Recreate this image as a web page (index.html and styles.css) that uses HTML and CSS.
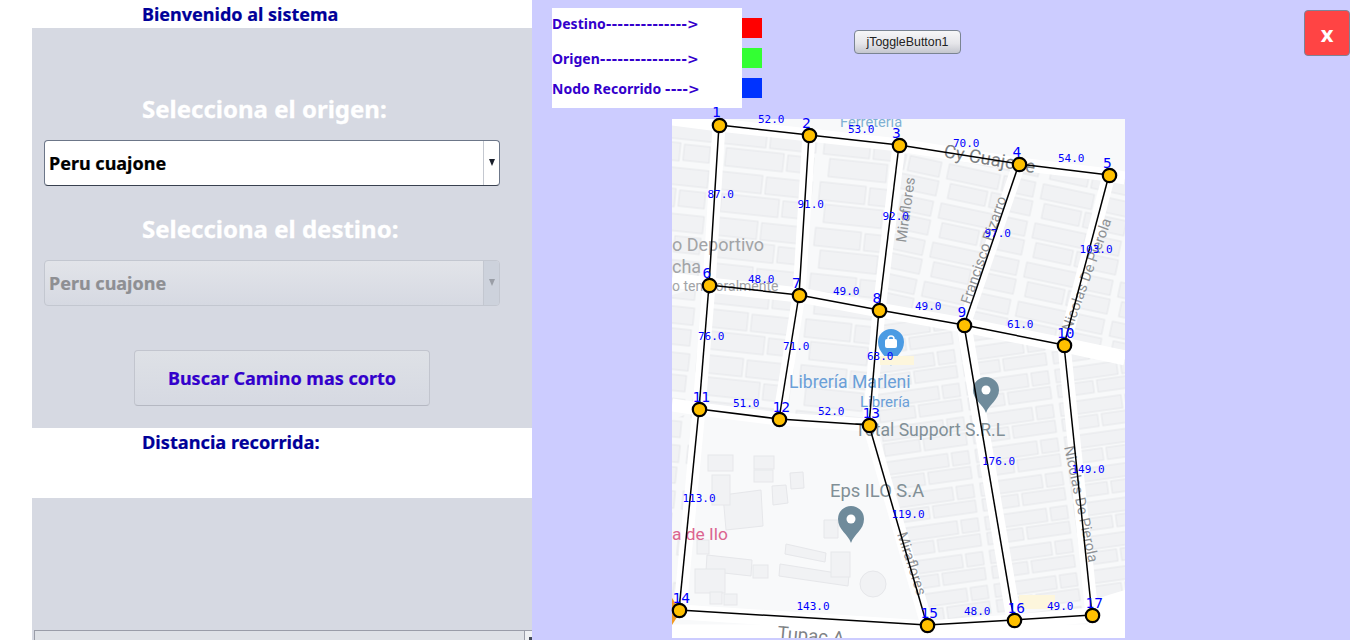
FILE: index.html
```html
<!DOCTYPE html>
<html lang="es">
<head>
<meta charset="utf-8">
<title>Camino mas corto</title>
<link rel="stylesheet" href="styles.css">
</head>
<body>
<div class="app">
  <section class="left">
    <h1 class="heading heading-top">Bienvenido al sistema</h1>
    <div class="form-panel">
      <h2 class="select-label">Selecciona el origen:</h2>
      <div class="combo">
        <span class="combo-value">Peru cuajone</span>
        <span class="combo-arrow"><i class="tri"></i></span>
      </div>
      <h2 class="select-label label-second">Selecciona el destino:</h2>
      <div class="combo combo-disabled">
        <span class="combo-value">Peru cuajone</span>
        <span class="combo-arrow"><i class="tri"></i></span>
      </div>
      <button class="search-btn" type="button">Buscar Camino mas corto</button>
    </div>
    <div class="distance">
      <h2 class="heading">Distancia recorrida:</h2>
    </div>
    <div class="result-panel">
      <div class="result-list"><span class="result-scroll"></span></div>
    </div>
  </section>

  <section class="right">
    <div class="top-row">
      <div class="legend">
        <div class="legend-row legend-first">Destino<span class="dash">--------------&gt;</span></div>
        <div class="legend-row">Origen<span class="dash">---------------&gt;</span></div>
        <div class="legend-row">Nodo Recorrido <span class="dash">----&gt;</span></div>
      </div>
      <div class="swatches">
        <span class="swatch swatch-red"></span>
        <span class="swatch swatch-green"></span>
        <span class="swatch swatch-blue"></span>
      </div>
      <button class="toggle-btn" type="button">jToggleButton1</button>
      <button class="close-btn" type="button">X</button>
    </div>

    <svg class="map" width="453" height="519" viewBox="672 119 453 519" xmlns="http://www.w3.org/2000/svg">
      <defs>
        <clipPath id="mapclip"><rect x="672" y="119" width="453" height="519"/></clipPath>
        <pattern id="b1" width="104" height="46" patternUnits="userSpaceOnUse" patternTransform="rotate(6)">
          <g class="bld">
            <rect x="3" y="3" width="46" height="18"/><rect x="53" y="4" width="46" height="17"/>
            <rect x="10" y="25" width="58" height="18"/><rect x="72" y="26" width="26" height="16"/>
          </g>
        </pattern>
        <pattern id="b2" width="96" height="40" patternUnits="userSpaceOnUse" patternTransform="rotate(12)">
          <g class="bld">
            <rect x="3" y="3" width="52" height="15"/><rect x="59" y="3" width="32" height="15"/>
            <rect x="8" y="22" width="38" height="15"/><rect x="50" y="22" width="42" height="15"/>
          </g>
        </pattern>
        <pattern id="b3" width="90" height="34" patternUnits="userSpaceOnUse" patternTransform="rotate(-8)">
          <g class="bld">
            <rect x="3" y="3" width="62" height="13"/><rect x="69" y="3" width="17" height="13"/>
            <rect x="3" y="19" width="36" height="12"/><rect x="43" y="19" width="43" height="12"/>
          </g>
        </pattern>
      </defs>

      <g clip-path="url(#mapclip)">
        <rect class="map-bg" x="672" y="119" width="453" height="519"/>

        <polygon fill="url(#b1)" points="672,119 719,125 709,285 672,285"/>
        <polygon fill="url(#b1)" points="719,125 809,135 799,295 709,285"/>
        <polygon fill="url(#b1)" points="809,135 899,145 879,310 799,295"/>
        <polygon fill="url(#b2)" points="899,145 1019,164 964,325 879,310"/>
        <polygon fill="url(#b2)" points="1019,164 1109,175 1064,345 964,325"/>
        <polygon fill="url(#b2)" points="1109,175 1125,175 1125,350 1064,345"/>
        <polygon fill="url(#b1)" points="672,295 709,285 699,409 672,409"/>
        <polygon fill="url(#b1)" points="709,285 799,295 779,419 699,409"/>
        <polygon fill="url(#b1)" points="799,295 879,310 869,425 779,419"/>
        <polygon fill="url(#b3)" points="879,310 964,325 1014,620 927,625 869,425"/>
        <polygon fill="url(#b3)" points="964,325 1064,345 1092,615 1014,620"/>
        <polygon fill="url(#b3)" points="1064,345 1125,355 1125,600 1092,615"/>
        <polygon fill="url(#b1)" points="672,420 699,409 680,600 672,600"/>

        <g class="bld">
          <polygon points="723,495 761,490 763,526 726,530"/>
          <rect x="754" y="456" width="20" height="13"/><rect x="754" y="470" width="19" height="12"/>
          <polygon points="772,486 786,485 788,503 773,505"/>
          <polygon points="790,473 803,472 804,488 791,489"/>
          <polygon points="786,544 826,553 825,562 785,554"/>
          <polygon points="780,564 849,575 848,586 779,576"/>
          <rect x="831" y="552" width="19" height="25"/>
          <polygon points="824,520 838,520 838,538 824,538"/>
          <polygon points="707,555 752,560 751,576 706,571"/>
          <rect x="753" y="565" width="15" height="13"/>
          <rect x="695" y="569" width="30" height="24"/>
          <rect x="710" y="592" width="12" height="12"/><rect x="724" y="594" width="13" height="11"/>
          <circle cx="873" cy="584" r="13"/>
          <rect x="708" y="455" width="25" height="16"/><rect x="712" y="475" width="18" height="30"/>
          <rect x="697" y="540" width="12" height="14"/>
        </g>

        <g class="roads">
          <polyline points="672,119 719,125 809,135 899,145 1019,164 1109,175 1125,178"/>
          <polyline points="719,125 709,285 699,409 680,610"/>
          <polyline points="809,135 799,295 779,419"/>
          <polyline points="899,145 879,310 869,425"/>
          <polyline points="1019,164 964,325"/>
          <polyline points="1109,175 1064,345"/>
          <polyline class="road-wide" points="672,280 709,285 799,295 879,310 964,325 1064,345 1125,358"/>
          <polyline points="672,405 699,409 779,419 869,425"/>
          <polyline points="869,425 927,625"/>
          <polyline class="road-wide" points="964,325 1014,620"/>
          <polyline points="1064,345 1092,615"/>
          <polyline class="road-wide" points="672,606 680,612 927,628 1014,622 1125,612"/>
          <polyline class="road-wide" points="672,632 1125,632"/>
          <polygon class="road-plain" points="1092,600 1125,590 1125,638 1085,638"/>
        </g>

        <g class="pin-gray">
          <path d="M986 413c-3-9-13-13-13-23a13 13 0 0 1 26 0c0 10-10 14-13 23z"/>
          <path d="M851 543c-3-9-13-13-13-24a13 13 0 0 1 26 0c0 11-10 15-13 24z"/>
        </g>
        <circle class="pin-hole" cx="986" cy="390" r="4.5"/>
        <circle class="pin-hole" cx="851" cy="519" r="4.5"/>
        <path class="pin-blue" d="M891 366c-3-9-13-13-13-24a13 13 0 0 1 26 0c0 11-10 15-13 24z"/>
        <rect class="pin-hole" x="885" y="339" width="12" height="9" rx="2"/>
        <path class="pin-bag" d="M888 339a3 3 0 0 1 6 0"/>
        <path class="pin-orange" d="M672 598l4 6 3 10-7 11z"/>

        <rect class="hilite" x="880" y="356" width="34" height="9"/>
        <rect class="hilite" x="1019" y="595" width="36" height="14"/>

        <text class="m-blue m-ferr" x="840" y="127">Ferretería</text>
        <text class="m-cuaj" transform="translate(943 157) rotate(10)">Cy Cuajone</text>
        <text class="m-dep" x="672" y="251">o Deportivo</text>
        <text class="m-dep" x="672" y="273">cha</text>
        <text class="m-small" x="672" y="291">o temporalmente</text>
        <text class="m-blue m-lib" x="789" y="388">Librería Marleni</text>
        <text class="m-blue m-lib2" x="860" y="407">Librería</text>
        <text class="m-total" x="855" y="436">Total Support S.R.L</text>
        <text class="m-eps" x="830" y="497">Eps ILO S.A</text>
        <text class="m-pink" x="672" y="540">a de Ilo</text>
        <text class="m-street" transform="translate(906 243) rotate(-82)">Miraflores</text>
        <text class="m-street" transform="translate(970 305) rotate(-71)">Francisco Pizarro</text>
        <text class="m-street" transform="translate(1071 332) rotate(-70)">Nicolas De Pierola</text>
        <text class="m-street" transform="translate(1064 447) rotate(78)">Nicolas De Pierola</text>
        <text class="m-street" transform="translate(897 534) rotate(72)">Miraflores</text>
        <text class="m-cuaj" transform="translate(777 639) rotate(5)">Tupac A</text>
      </g>

      <g class="edges">
        <line x1="719" y1="125" x2="809" y2="135"/><line x1="809" y1="135" x2="899" y2="145"/>
        <line x1="899" y1="145" x2="1019" y2="164"/><line x1="1019" y1="164" x2="1109" y2="175"/>
        <line x1="719" y1="125" x2="709" y2="285"/><line x1="809" y1="135" x2="799" y2="295"/>
        <line x1="899" y1="145" x2="879" y2="310"/><line x1="1019" y1="164" x2="964" y2="325"/>
        <line x1="1109" y1="175" x2="1064" y2="345"/>
        <line x1="709" y1="285" x2="799" y2="295"/><line x1="799" y1="295" x2="879" y2="310"/>
        <line x1="879" y1="310" x2="964" y2="325"/><line x1="964" y1="325" x2="1064" y2="345"/>
        <line x1="709" y1="285" x2="699" y2="409"/><line x1="799" y1="295" x2="779" y2="419"/>
        <line x1="879" y1="310" x2="869" y2="425"/><line x1="964" y1="325" x2="1014" y2="620"/>
        <line x1="1064" y1="345" x2="1092" y2="615"/>
        <line x1="699" y1="409" x2="779" y2="419"/><line x1="779" y1="419" x2="869" y2="425"/>
        <line x1="699" y1="409" x2="679" y2="610"/><line x1="869" y1="425" x2="927" y2="625"/>
        <line x1="679" y1="610" x2="927" y2="625"/><line x1="927" y1="625" x2="1014" y2="620"/>
        <line x1="1014" y1="620" x2="1092" y2="615"/>
      </g>

      <g class="weights">
        <text x="758" y="123">52.0</text><text x="848" y="133">53.0</text>
        <text x="953" y="147">70.0</text><text x="1058" y="162">54.0</text>
        <text x="707.5" y="198">87.0</text><text x="797.5" y="208">91.0</text>
        <text x="882.5" y="220">92.0</text><text x="984.5" y="237">97.0</text>
        <text x="1079.5" y="253">103.0</text><text x="748" y="283">48.0</text>
        <text x="833" y="295">49.0</text><text x="915" y="310">49.0</text>
        <text x="1007" y="328">61.0</text><text x="698" y="340">76.0</text>
        <text x="783" y="350">71.0</text><text x="867" y="360">63.0</text>
        <text x="733" y="407">51.0</text><text x="818" y="415">52.0</text>
        <text x="982" y="465">176.0</text><text x="1071.5" y="473">149.0</text>
        <text x="891.5" y="518">119.0</text><text x="682.5" y="502">113.0</text>
        <text x="796.5" y="610">143.0</text><text x="964" y="615">48.0</text>
        <text x="1047" y="610">49.0</text>
      </g>

      <g class="nodes">
        <circle cx="719.5" cy="125.5" r="6.7"/><circle cx="809.5" cy="135.5" r="6.7"/>
        <circle cx="899.5" cy="145.5" r="6.7"/><circle cx="1019.5" cy="164.5" r="6.7"/>
        <circle cx="1109.5" cy="175.5" r="6.7"/><circle cx="709.5" cy="285.5" r="6.7"/>
        <circle cx="799.5" cy="295.5" r="6.7"/><circle cx="879.5" cy="310.5" r="6.7"/>
        <circle cx="964.5" cy="325.5" r="6.7"/><circle cx="1064.5" cy="345.5" r="6.7"/>
        <circle cx="699.5" cy="409.5" r="6.7"/><circle cx="779.5" cy="419.5" r="6.7"/>
        <circle cx="869.5" cy="425.5" r="6.7"/><circle cx="679.5" cy="610.5" r="6.7"/>
        <circle cx="927.5" cy="625.5" r="6.7"/><circle cx="1014.5" cy="620.5" r="6.7"/>
        <circle cx="1092.5" cy="615.5" r="6.7"/>
      </g>

      <g class="node-ids">
        <text x="712" y="117">1</text><text x="802" y="128">2</text>
        <text x="892" y="138">3</text><text x="1012.5" y="157">4</text>
        <text x="1103" y="168">5</text><text x="702.5" y="278">6</text>
        <text x="792" y="288">7</text><text x="872.5" y="303">8</text>
        <text x="957.5" y="317">9</text><text x="1057" y="338">10</text>
        <text x="692.5" y="402">11</text><text x="772.5" y="412">12</text>
        <text x="862.5" y="418">13</text><text x="672.5" y="603">14</text>
        <text x="920.5" y="618">15</text><text x="1007.5" y="613">16</text>
        <text x="1085.5" y="608">17</text>
      </g>
    </svg>
  </section>
</div>
</body>
</html>
```

FILE: styles.css
```css
* { box-sizing: border-box; }

html, body {
  margin: 0;
  height: 100%;
  overflow: hidden;
  background: #fff;
}

.app {
  display: flex;
  width: 1350px;
  height: 640px;
  font-family: "Noto Sans", "DejaVu Sans", sans-serif;
}

/* ---------- left column ---------- */
.left {
  width: 532px;
  flex: none;
  display: flex;
  flex-direction: column;
  background: #fff;
}

.heading {
  margin: 0;
  font-size: 18px;
  line-height: 28px;
  font-weight: 700;
  color: #000099;
  -webkit-text-stroke: 0.2px #000099;
}

.heading-top {
  height: 28px;
  padding-left: 142px;
}

.form-panel {
  margin-left: 32px;
  height: 400px;
  padding: 61px 32px 0 12px;
  background: #d6d9e2;
  display: flex;
  flex-direction: column;
  align-items: flex-start;
}

.select-label {
  margin: 0 0 11px;
  padding-left: 98px;
  font-size: 24px;
  line-height: 40px;
  font-weight: 700;
  color: #fff;
  -webkit-text-stroke: 0.3px #fff;
}

.label-second { margin-top: 23px; }

.combo {
  width: 456px;
  height: 46px;
  display: flex;
  align-items: stretch;
  border: 1px solid #6c7688;
  border-bottom-color: #39414f;
  border-radius: 4px;
  background: #fff;
  overflow: hidden;
}

.combo-value {
  flex: 1;
  padding-left: 4px;
  font-size: 18px;
  line-height: 44px;
  font-weight: 700;
  color: #000;
  -webkit-text-stroke: 0.2px currentColor;
}

.combo-arrow {
  width: 16px;
  flex: none;
  display: flex;
  align-items: center;
  justify-content: center;
  border-left: 1px solid #c4c8d0;
}

.tri {
  display: block;
  width: 0;
  height: 0;
  margin-bottom: 2px;
  border-left: 3.5px solid transparent;
  border-right: 3.5px solid transparent;
  border-top: 7px solid #1a1f2b;
}

.combo-disabled {
  border-color: #c3c7d0;
  background: linear-gradient(#e2e4e9, #d6d9e2);
}

.combo-disabled .combo-value { color: #8e8f93; }
.combo-disabled .combo-arrow { background: #cdd2dc; border-left-color: #c3c7d0; }
.combo-disabled .tri { border-top-color: #9a9ea6; }

.search-btn {
  align-self: flex-start;
  width: 296px;
  height: 56px;
  margin: 44px 0 0 90px;
  padding: 0;
  border: 1px solid #c2c5ce;
  border-bottom-color: #b5b8c2;
  border-radius: 4px;
  background: linear-gradient(#dee1e6, #d6d9e2);
  font-family: inherit;
  font-size: 18px;
  font-weight: 700;
  color: #3300cc;
  -webkit-text-stroke: 0.2px #3300cc;
}

.distance {
  height: 70px;
  margin-left: 32px;
  padding-left: 110px;
  background: #fff;
}

.distance .heading { font-size: 18.2px; }

.result-panel {
  flex: 1;
  margin-left: 32px;
  padding: 132px 0 0 2px;
  background: #d6d9e2;
  overflow: hidden;
}

.result-list {
  position: relative;
  height: 40px;
  border: 1px solid #9a9da8;
  border-right: 0;
  background: #dee1e6;
}

.result-scroll {
  position: absolute;
  top: 0;
  right: 0;
  width: 8px;
  height: 40px;
  border-left: 1px solid #9a9da8;
  background: #eef0f3;
}

.result-scroll::after {
  content: "";
  position: absolute;
  left: 4px;
  top: 6px;
  width: 3px;
  height: 3px;
  background: #444a58;
}

/* ---------- right column ---------- */
.right {
  flex: 1;
  padding: 8px 0 0 20px;
  background: #ccccff;
  overflow: hidden;
}

.top-row {
  display: flex;
  align-items: flex-start;
  height: 100px;
}

.legend {
  width: 190px;
  height: 100px;
  padding-top: 1px;
  background: #fff;
  flex: none;
}

.legend-row {
  font-size: 14px;
  line-height: 30px;
  font-weight: 700;
  color: #3300cc;
  white-space: nowrap;
}

.legend-first { margin-bottom: 5px; }

.dash {
  font-family: "DejaVu Sans", sans-serif;
}

.swatches {
  display: flex;
  flex-direction: column;
  gap: 10px;
  padding-top: 10px;
  flex: none;
}

.swatch { display: block; width: 20px; height: 20px; }
.swatch-red { background: #ff0000; }
.swatch-green { background: #33ff33; }
.swatch-blue { background: #0033ff; }

.toggle-btn {
  width: 107px;
  height: 24px;
  margin: 22px 0 0 92px;
  padding: 0;
  border: 1px solid #7a8492;
  border-radius: 4px;
  background: linear-gradient(#f6f6f8, #e6e6ea 55%, #c4c6ce);
  font-family: "Liberation Sans", Arial, sans-serif;
  font-size: 12.4px;
  color: #222;
  flex: none;
}

.close-btn {
  width: 46px;
  height: 46px;
  margin: 2px 0 0 auto;
  padding: 0;
  border: 1px solid #7d8396;
  border-radius: 4px;
  background: #ff4444;
  font-family: inherit;
  font-size: 22px;
  line-height: 1;
  font-weight: 700;
  color: #fff;
  text-transform: lowercase;
  flex: none;
}

.map {
  display: block;
  margin: 11px 0 0 120px;
  overflow: visible;
}

.map-bg { fill: #f8f9fa; }
.bld rect, .bld polygon, .bld circle { fill: #f1f2f4; stroke: #e6e7ea; stroke-width: 1; }

.roads polyline { fill: none; stroke: #fff; stroke-width: 13; }
.roads .road-wide { stroke-width: 15; }
.road-plain { fill: #fff; }

.pin-gray path { fill: #6f8b9b; }
.pin-hole { fill: #fff; }
.pin-blue { fill: #4b9be3; }
.pin-bag { fill: none; stroke: #fff; stroke-width: 1.5; }
.pin-orange { fill: #f19a22; }
.hilite { fill: #fdf6dc; }

.map text { font-family: "Roboto", "Noto Sans", sans-serif; }
.m-blue { fill: #6a9fd8; }
.m-ferr { font-size: 14.6px; fill: #7fb0d3; }
.m-cuaj { font-size: 18.5px; fill: #7e8285; }
.m-dep { font-size: 18px; fill: #a2a4a7; }
.m-small { font-size: 14px; fill: #a2a4a7; }
.m-lib { font-size: 17.6px; }
.m-lib2 { font-size: 15px; }
.m-total { font-size: 17.6px; fill: #818f96; }
.m-eps { font-size: 18.4px; fill: #818f96; }
.m-pink { font-size: 17.4px; fill: #db6590; }
.m-street { font-size: 14.6px; fill: #8f9295; }

.edges line { stroke: #000; stroke-width: 1.5; }
.nodes circle { fill: #ffc000; stroke: #000; stroke-width: 2.2; }

.map .weights text {
  font-family: "DejaVu Sans Mono", monospace;
  font-size: 11px;
  fill: #0000ff;
}

.map .node-ids text {
  font-family: "DejaVu Sans Mono", monospace;
  font-size: 14.5px;
  fill: #0000ff;
}
```
